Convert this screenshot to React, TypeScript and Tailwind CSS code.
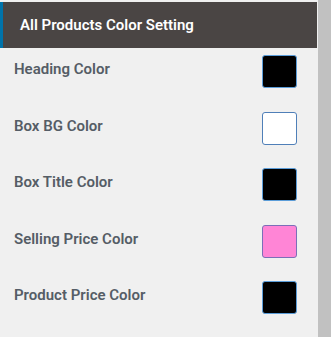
const rows = [
  { label: "Heading Color", color: "bg-black", border: "border-[#5b9dd9]" },
  { label: "Box BG Color", color: "bg-white", border: "border-[#4f7fb8]" },
  { label: "Box Title Color", color: "bg-black", border: "border-[#5b9dd9]" },
  { label: "Selling Price Color", color: "bg-[#ff85d6]", border: "border-[#7b6fb8]" },
  { label: "Product Price Color", color: "bg-black", border: "border-[#5b9dd9]" },
];

export default function App() {
  return (
    <div className="flex h-[337px] w-[331px] bg-[#f0f0f0] font-['Roboto',sans-serif]">
      <div className="w-[317px] pt-[2px]">
        <div className="flex h-[46px] items-center border-l-[3px] border-[#0073aa] bg-[#4a4544] pl-[17px]">
          <h3 className="text-[15px] font-semibold text-white">All Products Color Setting</h3>
        </div>
        <ul className="pl-[14px] pr-[20px] pt-[7px]">
          {rows.map((r) => (
            <li key={r.label} className="flex h-[56.5px] items-start justify-between">
              <span className="pt-[3px] text-[15px] font-semibold text-[#555d66]">{r.label}</span>
              <span className={`h-[33px] w-[35px] rounded-[3px] border ${r.border} ${r.color}`} />
            </li>
          ))}
        </ul>
      </div>
      <div className="ml-auto w-[13px] bg-[#c1c1c1]" />
    </div>
  );
}
